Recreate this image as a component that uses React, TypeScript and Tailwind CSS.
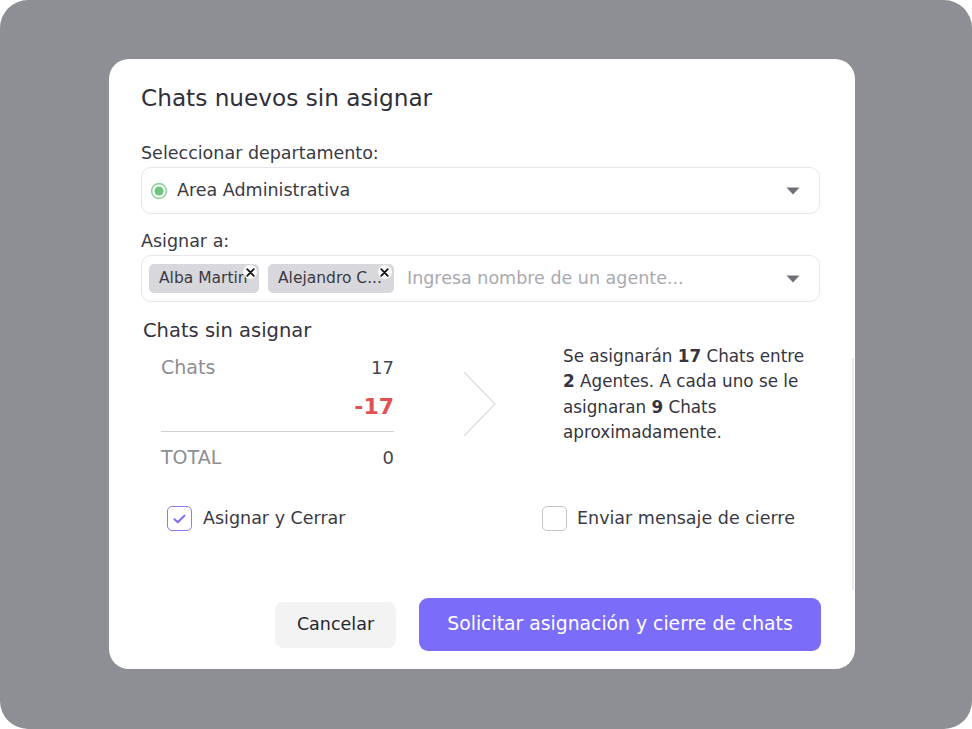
import React from "react";

function Caret() {
  return (
    <svg width="14" height="8" viewBox="0 0 14 8" className="shrink-0">
      <path d="M0.5 0.5 H13.5 L7 7.5 Z" fill="#6e6e78" />
    </svg>
  );
}

function Chip({ label }: { label: string }) {
  return (
    <div className="relative flex h-[29px] items-center rounded-[5px] bg-[#d8d8dc] pl-[10px] pr-[12px] text-[15.5px] text-[#3a3a44]">
      <span className="whitespace-nowrap">{label}</span>
      <span className="absolute right-[2px] top-[1px] flex h-[14px] w-[14px] items-center justify-center rounded-full bg-white/85">
        <svg width="9" height="9" viewBox="0 0 9 9">
          <path d="M1.2 1.2 L7.8 7.8 M7.8 1.2 L1.2 7.8" stroke="#111" strokeWidth="1.7" strokeLinecap="round" />
        </svg>
      </span>
    </div>
  );
}

export default function App() {
  return (
    <div className="h-[729px] w-[972px] bg-white" style={{ fontFamily: '"DejaVu Sans", sans-serif' }}>
      <div className="h-full w-full rounded-[28px] bg-[#8e8f94] pl-[109px] pt-[59px]">
        <div className="relative flex h-[610px] w-[746px] flex-col rounded-[20px] bg-white pl-[32px] pr-[34px] pt-[25px]">
          <h1 className="text-[23.2px] leading-[28px] text-[#2f2f3b]">Chats nuevos sin asignar</h1>

          <div className="mt-[29px] text-[17.5px] leading-[24px] text-[#3a3a44]">Seleccionar departamento:</div>
          <div className="mr-[1px] mt-[2px] flex h-[47px] items-center rounded-[10px] border border-[#e6e6ea] pl-[8px] pr-[19px]">
            <svg width="18" height="18" viewBox="0 0 18 18" className="shrink-0">
              <circle cx="9" cy="9" r="7.4" fill="none" stroke="#8fd49b" strokeWidth="1.6" />
              <circle cx="9" cy="9" r="4.5" fill="#6cc47d" />
            </svg>
            <span className="ml-[9px] flex-1 text-[17.5px] text-[#3a3a44]">Area Administrativa</span>
            <Caret />
          </div>

          <div className="mt-[15px] text-[17.5px] leading-[24px] text-[#3a3a44]">Asignar a:</div>
          <div className="mr-[1px] mt-[2px] flex h-[47px] items-center rounded-[10px] border border-[#e6e6ea] pl-[7px] pr-[19px]">
            <div className="flex items-center gap-[9px]">
              <div className="w-[110px]">
                <Chip label="Alba Martin" />
              </div>
              <Chip label="Alejandro C..." />
            </div>
            <span className="ml-[13px] flex-1 whitespace-nowrap text-[17.5px] text-[#a9a9b1]">Ingresa nombre de un agente...</span>
            <Caret />
          </div>

          <div className="ml-[2px] mt-[16px] text-[19.5px] leading-[26px] text-[#33333d]">Chats sin asignar</div>

          <div className="flex">
            <div className="ml-[20px] w-[233px] pt-[10px]">
              <div className="flex h-[26px] items-center justify-between text-[19px]">
                <span className="text-[#8d8d93]">Chats</span>
                <span className="text-[18px] text-[#45454d]">17</span>
              </div>
              <div className="mt-[12px] flex h-[28px] items-center justify-end text-[22px] font-bold text-[#e25050]">-17</div>
              <div className="mt-[11px] h-px bg-[#cfcfd4]" />
              <div className="mt-[12px] flex h-[26px] items-center justify-between text-[19px]">
                <span className="text-[#8d8d93]">TOTAL</span>
                <span className="text-[18px] text-[#45454d]">0</span>
              </div>
            </div>
            <div className="ml-[69px] pt-[27px]">
              <svg width="34" height="66" viewBox="0 0 34 66">
                <path d="M1 1 L32 33 L1 65" fill="none" stroke="#dcdce0" strokeWidth="1.2" />
              </svg>
            </div>
            <div className="ml-[66px] text-[16.8px] leading-[25.3px] text-[#35353f]">
              <div className="whitespace-nowrap">Se asignarán <b>17</b> Chats entre</div>
              <div className="whitespace-nowrap"><b>2</b> Agentes. A cada uno se le</div>
              <div className="whitespace-nowrap">asignaran <b>9</b> Chats</div>
              <div className="whitespace-nowrap">aproximadamente.</div>
            </div>
          </div>

          <div className="mt-[36px] flex h-[25px] items-center">
            <div className="ml-[26px] flex w-[375px] items-center">
              <span className="flex h-[25px] w-[25px] items-center justify-center rounded-[5px] border-[1.5px] border-[#8a7cf4]">
                <svg width="13" height="10" viewBox="0 0 13 10">
                  <path d="M1.5 5.2 L4.8 8.3 L11.5 1.6" fill="none" stroke="#7c6cf2" strokeWidth="2" strokeLinecap="round" strokeLinejoin="round" />
                </svg>
              </span>
              <span className="ml-[11px] text-[17.5px] text-[#3a3a44]">Asignar y Cerrar</span>
            </div>
            <div className="flex items-center">
              <span className="h-[25px] w-[25px] rounded-[5px] border-[1.5px] border-[#c4c4c9]" />
              <span className="ml-[10px] text-[17.5px] text-[#3a3a44]">Enviar mensaje de cierre</span>
            </div>
          </div>

          <div className="mt-[67px] flex items-center justify-end gap-[23px]">
            <button className="h-[46px] w-[121px] rounded-[8px] bg-[#f3f3f4] text-[17.5px] text-[#26262e]">Cancelar</button>
            <button className="h-[53px] w-[402px] rounded-[9px] bg-[#7c6cfa] text-[18.8px] text-white">Solicitar asignación y cierre de chats</button>
          </div>

          <div className="absolute right-[1px] top-[299px] h-[232px] w-[2px] bg-[#e9e9ee]" />
        </div>
      </div>
    </div>
  );
}
